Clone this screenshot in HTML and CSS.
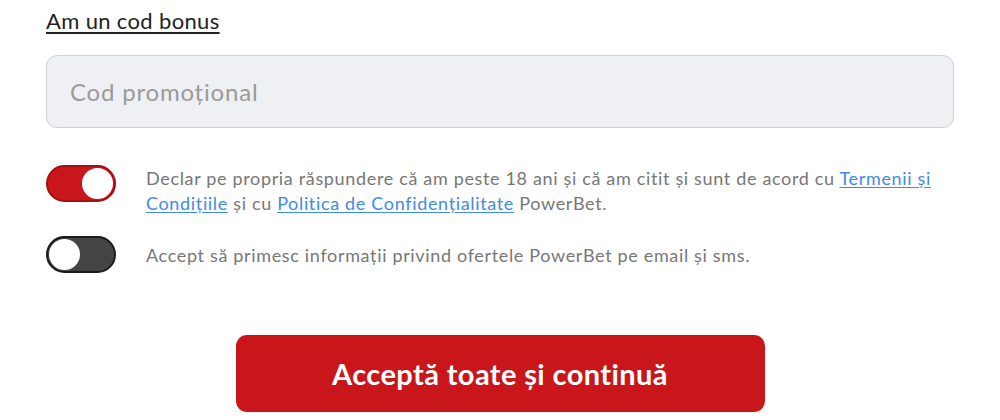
FILE: index.html
```html
<!DOCTYPE html>
<html lang="ro">
<head>
<meta charset="utf-8">
<link rel="stylesheet" href="styles.css">
</head>
<body>
<div class="page">
  <a class="bonus-link" href="#">Am un cod bonus</a>
  <div class="promo">Cod promoțional</div>
  <div class="consents">
    <div class="consent">
      <span class="toggle on"><span class="knob"></span></span>
      <p class="consent-text">Declar pe propria răspundere că am peste 18 ani și că am citit și sunt de acord cu <a href="#">Termenii și Condițiile</a> și cu <a href="#">Politica de Confidențialitate</a> PowerBet.</p>
    </div>
    <div class="consent single">
      <span class="toggle off"><span class="knob"></span></span>
      <p class="consent-text">Accept să primesc informații privind ofertele PowerBet pe email și sms.</p>
    </div>
  </div>
  <div class="actions">
    <button class="accept">Acceptă toate și continuă</button>
  </div>
</div>
</body>
</html>
```
FILE: styles.css
```css
html, body {
  margin: 0;
  padding: 0;
  background: #fff;
}
body {
  font-family: "Lato", "Open Sans", sans-serif;
}
.page {
  padding: 6px 46px 0 46px;
  width: 908px;
}
.bonus-link {
  display: inline-block;
  font-size: 22px;
  line-height: 30px;
  letter-spacing: 0.35px;
  color: #222;
  text-decoration: underline;
  text-underline-offset: 3px;
  text-decoration-thickness: 1.5px;
}
.promo {
  margin-top: 19px;
  box-sizing: border-box;
  height: 73px;
  border: 1px solid #cdd0d4;
  border-radius: 11px;
  background: #eef0f3;
  display: flex;
  align-items: center;
  padding-left: 23px;
  font-size: 24px;
  letter-spacing: 0.8px;
  color: #9a9a9a;
}
.consents {
  margin-top: 37px;
  display: flex;
  flex-direction: column;
  gap: 20px;
}
.consent {
  display: flex;
  align-items: flex-start;
  gap: 30px;
}
.consent.single {
  align-items: center;
}
.toggle {
  flex: none;
  width: 70px;
  height: 37px;
  box-sizing: border-box;
  border-radius: 19px;
  display: flex;
  align-items: center;
  padding: 0 3px;
}
.toggle.on {
  background: #c8161b;
  border: 2px solid #a41015;
  justify-content: flex-end;
}
.toggle.off {
  background: #444;
  border: 2px solid #1b1b1b;
  justify-content: flex-start;
}
.knob {
  width: 31px;
  height: 31px;
  border-radius: 50%;
  background: #fff;
}
.toggle.off .knob { margin-left: -2px; }
.toggle.on .knob { margin-right: -2px; }
.consent-text {
  margin: 0;
  font-size: 18px;
  letter-spacing: 0.66px;
  line-height: 25px;
  color: #777;
  padding-top: 1px;
}
.consent-text a {
  color: #3f8ae8;
  text-decoration: underline;
  text-underline-offset: 2px;
}
.actions {
  margin-top: 62px;
  display: flex;
  justify-content: center;
}
.accept {
  width: 529px;
  height: 77px;
  border: none;
  border-radius: 11px;
  background: #c8161b;
  color: #fff;
  font-family: inherit;
  font-size: 29px;
  letter-spacing: 0.4px;
  font-weight: 700;
  cursor: pointer;
}
```
